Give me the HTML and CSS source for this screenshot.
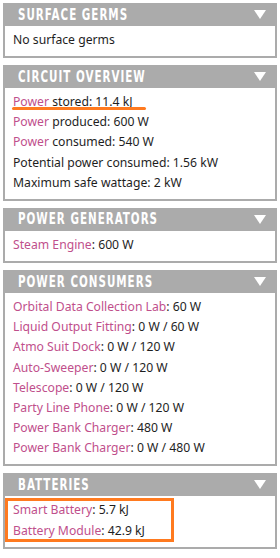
FILE: index.html
```html
<!DOCTYPE html>
<html lang="en">
<head>
    <meta charset="UTF-8">
    <meta name="viewport" content="width=device-width, initial-scale=1.0">
    <title>Power Overview</title>
    <link rel="stylesheet" href="styles.css">
</head>
<body>

    <div class="sidebar">

        <div class="panel">
            <div class="panel-header">
                <span class="panel-title">Surface Germs</span>
                <span class="arrow"></span>
            </div>
            <div class="panel-body">
                <div class="row">No surface germs</div>
            </div>
        </div>

        <div class="panel">
            <div class="panel-header">
                <span class="panel-title">Circuit Overview</span>
                <span class="arrow"></span>
            </div>
            <div class="panel-body">
                <div class="row marked"><span class="link">Power</span> stored: 11.4 kJ<span class="underline"></span></div>
                <div class="row"><span class="link">Power</span> produced: 600 W</div>
                <div class="row"><span class="link">Power</span> consumed: 540 W</div>
                <div class="row">Potential power consumed: 1.56 kW</div>
                <div class="row">Maximum safe wattage: 2 kW</div>
            </div>
        </div>

        <div class="panel">
            <div class="panel-header">
                <span class="panel-title">Power Generators</span>
                <span class="arrow"></span>
            </div>
            <div class="panel-body">
                <div class="row"><span class="link">Steam Engine</span>: 600 W</div>
            </div>
        </div>

        <div class="panel">
            <div class="panel-header">
                <span class="panel-title">Power Consumers</span>
                <span class="arrow"></span>
            </div>
            <div class="panel-body">
                <div class="row"><span class="link">Orbital Data Collection Lab</span>: 60 W</div>
                <div class="row"><span class="link">Liquid Output Fitting</span>: 0 W / 60 W</div>
                <div class="row"><span class="link">Atmo Suit Dock</span>: 0 W / 120 W</div>
                <div class="row"><span class="link">Auto-Sweeper</span>: 0 W / 120 W</div>
                <div class="row"><span class="link">Telescope</span>: 0 W / 120 W</div>
                <div class="row"><span class="link">Party Line Phone</span>: 0 W / 120 W</div>
                <div class="row"><span class="link">Power Bank Charger</span>: 480 W</div>
                <div class="row"><span class="link">Power Bank Charger</span>: 0 W / 480 W</div>
            </div>
        </div>

        <div class="panel">
            <div class="panel-header">
                <span class="panel-title">Batteries</span>
                <span class="arrow"></span>
            </div>
            <div class="panel-body">
                <div class="row"><span class="link">Smart Battery</span>: 5.7 kJ</div>
                <div class="row"><span class="link">Battery Module</span>: 42.9 kJ</div>
                <span class="highlight-box"></span>
            </div>
        </div>

    </div>

</body>
</html>
```

FILE: styles.css
```css
body {
    margin: 0;
    padding: 0;
    background-color: #fff;
    font-family: 'Noto Sans', 'Open Sans', sans-serif;
    color: #1e1e1e;
}

.sidebar {
    padding: 3px 3px 0 3px;
    display: flex;
    flex-direction: column;
    gap: 7px;
}

.panel-header {
    height: 23px;
    background-color: #ababab;
    display: flex;
    align-items: center;
    justify-content: space-between;
    padding: 0 11px 0 15px;
}

/* the game font is tall and narrow, stretch a condensed face to get close */
.panel-title {
    display: inline-block;
    font-family: 'DejaVu Sans Condensed', 'DejaVu Sans', sans-serif;
    font-weight: bold;
    font-size: 11.5px;
    letter-spacing: 1px;
    text-transform: uppercase;
    color: #fff;
    transform: scaleY(1.35);
}

.arrow {
    width: 0;
    height: 0;
    border-left: 6px solid transparent;
    border-right: 6px solid transparent;
    border-top: 9px solid #fff;
}

.panel-body {
    position: relative;
    border: 2px solid #ababab;
    border-top: none;
    padding: 4px 8px 6px 8px;
}

.row {
    font-size: 12.2px;
    line-height: 20.15px;
    white-space: nowrap;
}

.link {
    color: #bf4f8c;
}

.marked {
    position: relative;
}

.underline {
    position: absolute;
    left: -1px;
    width: 134px;
    top: 15px;
    height: 3px;
    border-radius: 2px;
    background-color: #ff7a1f;
}

.highlight-box {
    position: absolute;
    left: 0;
    top: 2px;
    width: 163px;
    height: 38px;
    border: 3px solid #ff7a1f;
}
```
